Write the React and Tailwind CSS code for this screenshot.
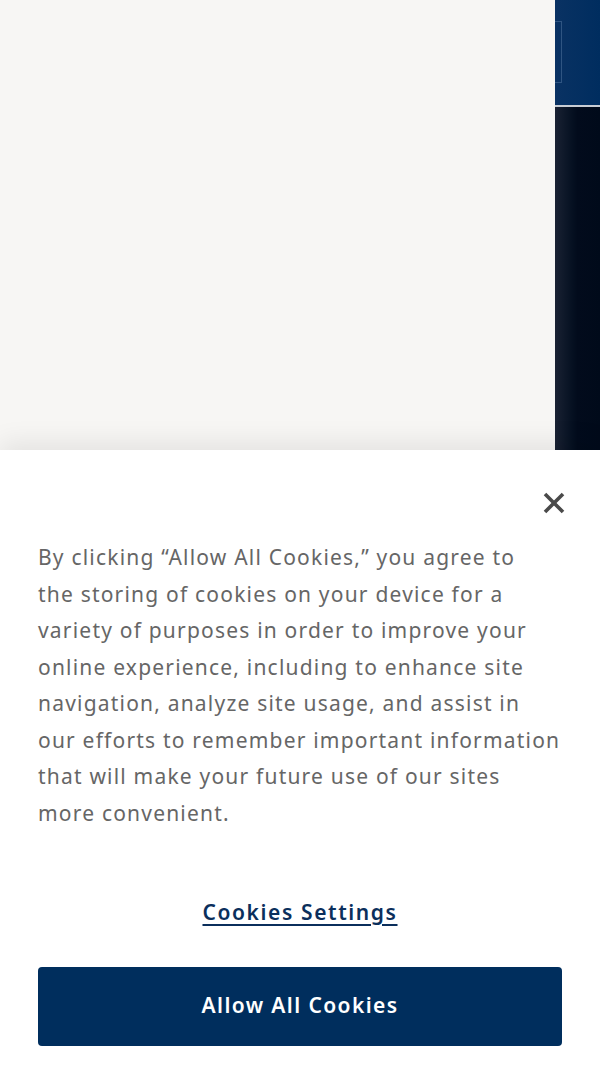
import React from "react";

const lines = [
  "By clicking “Allow All Cookies,” you agree to",
  "the storing of cookies on your device for a",
  "variety of purposes in order to improve your",
  "online experience, including to enhance site",
  "navigation, analyze site usage, and assist in",
  "our efforts to remember important information",
  "that will make your future use of our sites",
  "more convenient.",
];

const App = () => {
  return (
    <div className="h-[1065px] w-[600px] flex flex-col overflow-hidden bg-white" style={{ fontFamily: "'Noto Sans', sans-serif" }}>
      {/* page behind the banner */}
      <div className="h-[450px] flex">
        <div className="flex-1 bg-[#f7f6f4]" />
        <div className="w-[45px] flex flex-col">
          <div className="h-[105px] bg-gradient-to-r from-[#0a3263] to-[#002d5f] pt-[21px]">
            <div className="h-[62px] w-[7px] border border-l-0 border-[#2f5582]" />
          </div>
          <div className="h-[2px] bg-[#c8cdd4]" />
          <div className="flex-1 bg-gradient-to-r from-[#1a2233] via-[#020b1c] to-[#000a1a]" />
        </div>
      </div>

      {/* cookie banner */}
      <div className="relative flex-1 bg-white px-[38px] pt-[89px] shadow-[0_-8px_24px_rgba(0,0,0,0.08)]">
        <button className="absolute right-[34px] top-[41px] w-[24px] h-[24px] flex items-center justify-center" aria-label="Close">
          <svg width="24" height="24" viewBox="0 0 24 24">
            <path d="M3 3L21 21M21 3L3 21" stroke="#4a4a4a" strokeWidth="3.6" strokeLinecap="butt" />
          </svg>
        </button>

        <p className="text-[21px] leading-[36.5px] tracking-[1.2px] text-[#666666] whitespace-nowrap">
          {lines.map((l, i) => (
            <React.Fragment key={i}>
              {l}
              {i < lines.length - 1 && <br />}
            </React.Fragment>
          ))}
        </p>

        <div className="mt-[66px] flex justify-center">
          <button className="text-[21px] font-semibold tracking-[1.6px] text-[#0b2f5c] underline underline-offset-[4px] decoration-[2px]">
            Cookies Settings
          </button>
        </div>

        <button className="mt-[38px] w-full h-[79px] rounded-[4px] bg-[#002e5d] text-white text-[21px] font-semibold tracking-[1.4px]">
          Allow All Cookies
        </button>
      </div>
    </div>
  );
};

export default App;
